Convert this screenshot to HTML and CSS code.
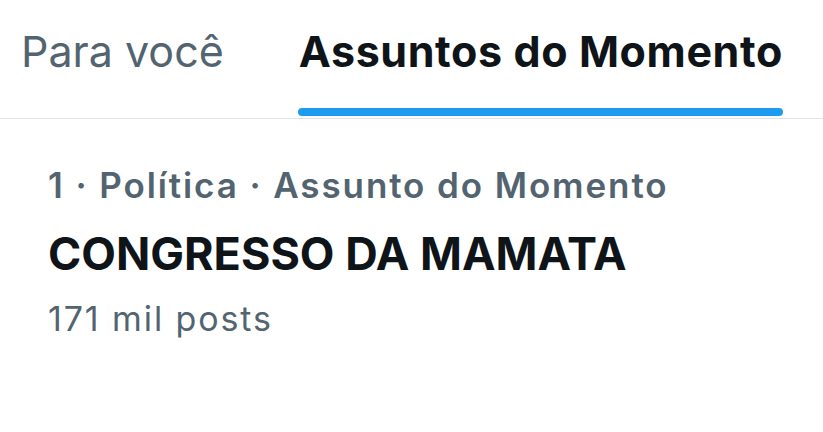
FILE: index.html
```html
<!DOCTYPE HTML>
<html>
	<head>
		<title>Assuntos do Momento</title>
		<link rel="stylesheet" href="styles.css">
	</head>
	<body>
		<div class = "tabs">
			<div class = "tab"><span class = "tabText">Para você</span></div>
			<div class = "tab active"><span class = "tabText">Assuntos do Momento</span><div class = "indicator"></div></div>
		</div>
		<div class = "trend">
			<div class = "trendMeta">1 · Política · Assunto do Momento</div>
			<div class = "trendName">CONGRESSO DA MAMATA</div>
			<div class = "trendCount">171 mil posts</div>
		</div>
	</body>
</html>
```
FILE: styles.css
```css
body
{
	margin: 0;
	background-color: #ffffff;
	font-family: Inter, Roboto, "Liberation Sans", sans-serif;
	color: #0f1419;
}
div.tabs
{
	display: flex;
	gap: 75px;
	height: 118px;
	padding-left: 21px;
	border-bottom: 1px solid #dde3e7;
}
div.tab
{
	display: flex;
	flex-direction: column;
	align-items: stretch;
	padding-top: 26px;
}
span.tabText
{
	font-size: 43px;
	line-height: 50px;
	color: #536471;
	white-space: nowrap;
}
div.tab.active
{
	margin-left: -1px;
}
div.tab.active span.tabText
{
	font-weight: 700;
	letter-spacing: 0.6px;
	color: #0f1419;
	padding-left: 1px;
}
div.indicator
{
	height: 8px;
	margin-top: 32px;
	border-radius: 4px;
	background-color: #1d9bf0;
}
div.trend
{
	padding-top: 46px;
	padding-left: 48px;
}
div.trendMeta
{
	font-size: 35px;
	line-height: 40px;
	font-weight: 600;
	letter-spacing: 1.9px;
	color: #536471;
}
div.trendName
{
	font-size: 45px;
	line-height: 56px;
	font-weight: 700;
	margin-top: 21px;
}
div.trendCount
{
	font-size: 34px;
	line-height: 40px;
	letter-spacing: 1.9px;
	color: #536471;
	margin-top: 17px;
}
```
